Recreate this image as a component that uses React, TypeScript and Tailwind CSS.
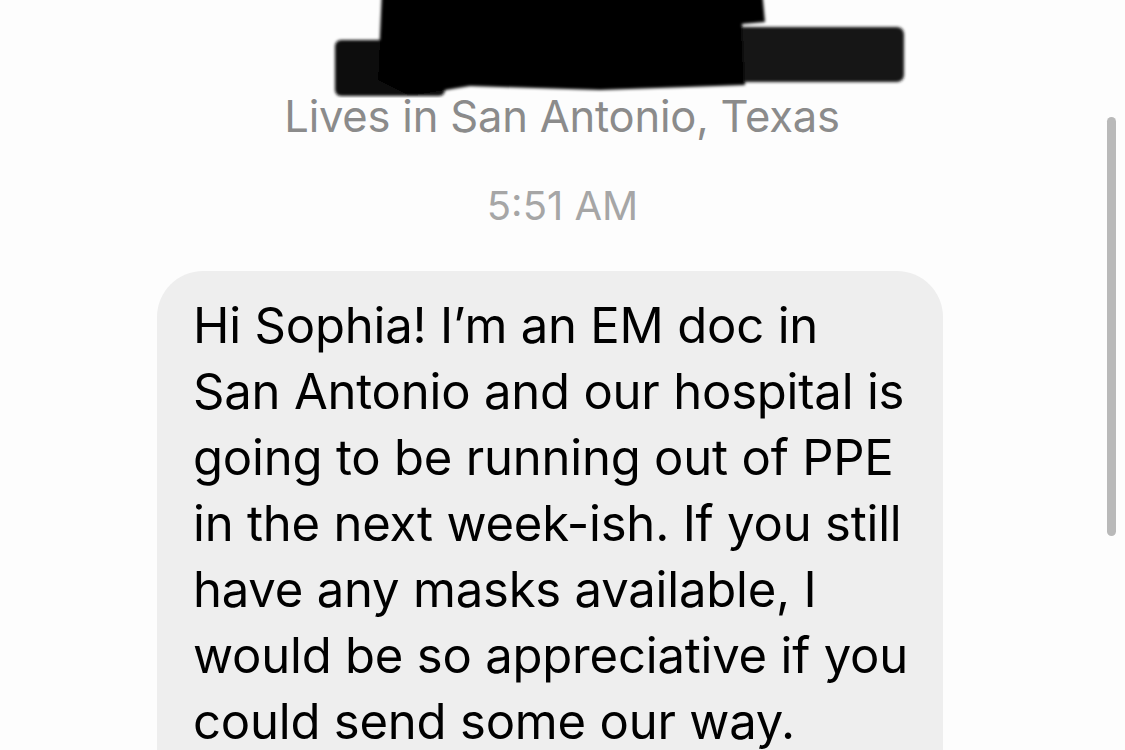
import React from "react";

const lines = [
  "Hi Sophia! I’m an EM doc in",
  "San Antonio and our hospital is",
  "going to be running out of PPE",
  "in the next week-ish. If you still",
  "have any masks available, I",
  "would be so appreciative if you",
  "could send some our way.",
];

function Redaction() {
  return (
    <svg width="1125" height="98" viewBox="0 0 1125 98" className="block">
      <defs>
        <filter id="soft" x="-5%" y="-20%" width="110%" height="140%">
          <feGaussianBlur stdDeviation="1.6" />
        </filter>
      </defs>
      <g filter="url(#soft)">
        <rect x="702" y="27" width="202" height="55" rx="7" fill="#141414" />
        <rect x="335" y="40" width="110" height="56" rx="6" fill="#0c0c0c" />
        <path d="M382 -10 L762 -10 L765 22 L742 24 L745 85 L600 90 L470 86 L410 96 L378 80 Z" fill="#050505" />
        <rect x="398" y="12" width="8" height="48" fill="#000" />
      </g>
    </svg>
  );
}

export default function App() {
  return (
    <div
      className="relative w-[1125px] h-[750px] overflow-hidden bg-[#fdfdfd]"
      style={{ fontFamily: "Inter, 'Noto Sans', 'Liberation Sans', sans-serif" }}
    >
      <div className="flex flex-col items-center">
        <Redaction />
        <p className="text-[43.5px] leading-[36px] text-[#8b8b8b] tracking-[-0.2px] ml-[-1px]">
          Lives in San Antonio, Texas
        </p>
        <p className="mt-[54px] text-[40px] leading-[36px] text-[#a6a6a6]">5:51 AM</p>
        <div className="mt-[47px] w-[786px] ml-[-25px] rounded-[46px] bg-[#eeeeee] pl-[36px] pt-[22px] pb-10">
          {lines.map((line, i) => (
            <div
              key={`line_${i + 1}`}
              className="whitespace-nowrap text-[49px] leading-[66px] text-black tracking-[-0.2px]"
            >
              {line}
            </div>
          ))}
        </div>
      </div>
      <div className="absolute left-[1107px] top-[117px] w-[9px] h-[419px] rounded-full bg-[#b9b9b9]" />
    </div>
  );
}
